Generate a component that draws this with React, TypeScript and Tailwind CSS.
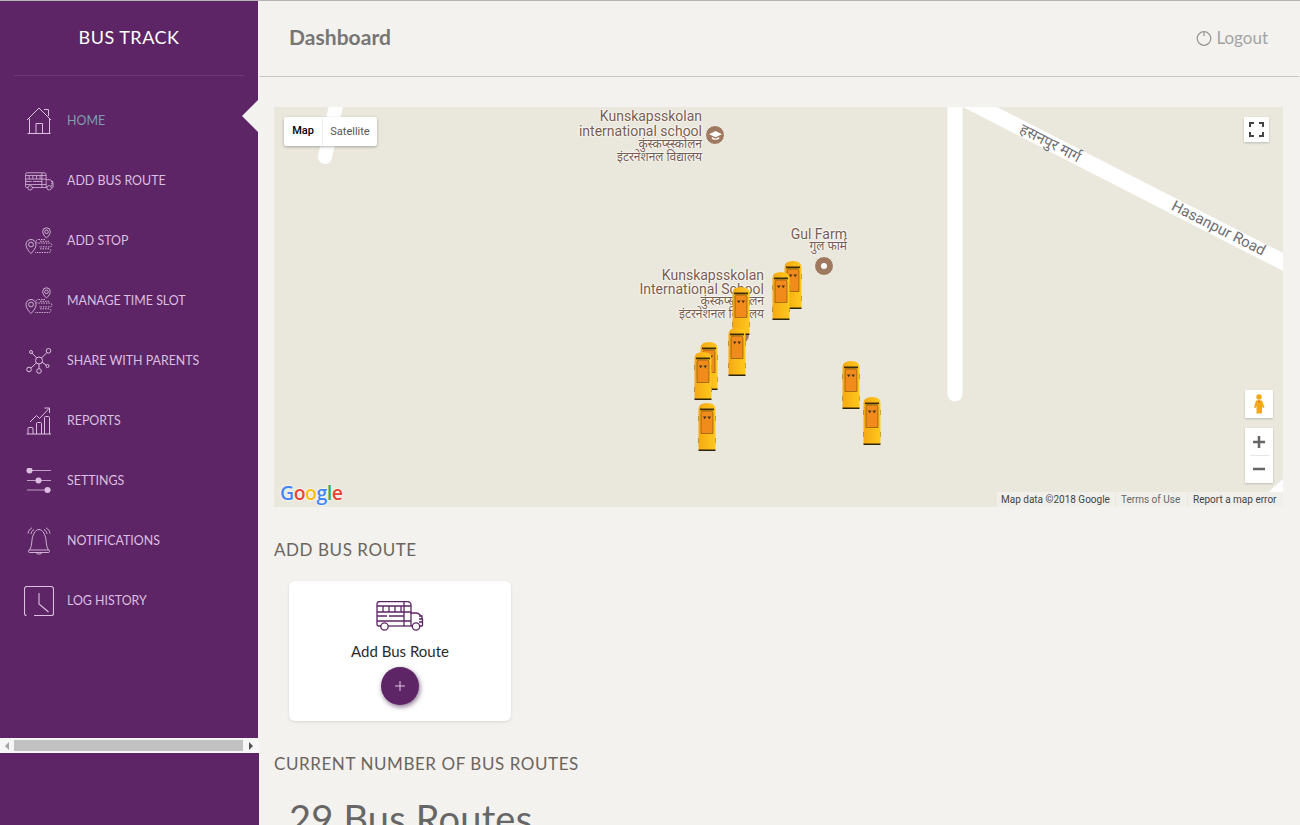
import { ReactNode } from "react";

const FONT = "font-['Lato','Open_Sans',sans-serif]";

const IconBus = ({ className }: { className?: string }) => (
  <svg viewBox="0 0 48 30" fill="none" stroke="currentColor" strokeWidth="1.3" className={className}>
    <path d="M5 25H2.500A1.500 1.500 0 0 1 1 23.500V3a2.500 2.500 0 0 1 2.500-2.500h28A3.500 3.500 0 0 1 35 4v8h5c3 0 6 3 6.500 6v6.500a1 1 0 0 1-1 .5H44" />
    <path d="M12 25h24" />
    <path d="M1 5h34M1 11h34M1 15h10M13 15h15M1 20h34" />
    <path d="M7 5v6M13 5v6M19 5v6M25 5v6M28 1v24M35 12v13" />
    <path d="M43 15h3.500M43 18h3.500M43 21h3.500" />
    <circle cx="8.500" cy="25.500" r="3.700" />
    <circle cx="40" cy="25.500" r="3.700" />
  </svg>
);

const IconHome = () => (
  <svg viewBox="0 0 26 28" fill="none" stroke="currentColor" strokeWidth="1" className="w-[26px] h-[28px]">
    <path d="M1 13 13 1l12 12" />
    <path d="M3.500 11.500V26.500h20V11.500" />
    <path d="M18 2.500h4.500v6.500" />
    <path d="M10 26.500V16.500h6.500v10" />
    <path d="M1.500 26.500h23" />
  </svg>
);

const IconPins = () => (
  <svg viewBox="0 0 28 28" fill="none" stroke="currentColor" strokeWidth="0.9" className="w-[28px] h-[28px]">
    <path d="M21.500 11s-3.800-3.300-3.800-6.400a3.800 3.800 0 0 1 7.600 0C25.300 7.700 21.500 11 21.500 11z" />
    <circle cx="21.500" cy="4.800" r="1.800" />
    <path d="M6 26.500S1 21.800 1 17.500a5 5 0 0 1 10 0c0 4.300-5 9-5 9z" />
    <circle cx="6" cy="17.500" r="2.400" />
    <g strokeDasharray="1.500 1">
      <path d="M20 12.500h-7a1.800 1.800 0 0 0 0 3.600h12a1.800 1.800 0 0 1 0 3.800H14" />
      <path d="M15 14.300h10M15 21.800h9a1.700 1.700 0 0 1 0 3.700H10" />
    </g>
  </svg>
);

const IconShare = () => (
  <svg viewBox="0 0 26 26" fill="none" stroke="currentColor" strokeWidth="1" className="w-[26px] h-[26px]">
    <circle cx="13" cy="12.500" r="3.500" />
    <circle cx="22.500" cy="2.800" r="2.300" />
    <circle cx="5" cy="4" r="1.500" />
    <circle cx="3" cy="21.500" r="2.300" />
    <circle cx="13" cy="23" r="2.300" />
    <circle cx="21.500" cy="18" r="1.500" />
    <path d="M15.500 10 21 4.500M10.800 9.800 6 5.200M10.300 15 5 20M13 16v4.700M16 14.200l4.200 2.900" />
  </svg>
);

const IconReports = () => (
  <svg viewBox="0 0 26 28" fill="none" stroke="currentColor" strokeWidth="1" className="w-[26px] h-[28px]">
    <path d="M.5 27h24.500" />
    <path d="M2 27v-5.500a1 1 0 0 1 1-1h3a1 1 0 0 1 1 1V27M10.500 27V16.500a1 1 0 0 1 1-1h3a1 1 0 0 1 1 1V27M18.500 27V10.500a1 1 0 0 1 1-1h3a1 1 0 0 1 1 1V27" />
    <path d="M4 15l6.500-6.500 3 3L23 1.500M18.500 1H23.500V6" />
  </svg>
);

const IconSliders = () => (
  <svg viewBox="0 0 26 26" stroke="currentColor" strokeWidth="0.8" className="w-[26px] h-[26px]" fill="currentColor">
    <path d="M1 2.500h24M1 12.500h24M1 22h24" />
    <circle cx="3.500" cy="2.500" r="3" stroke="none" />
    <circle cx="12.500" cy="12.500" r="3" stroke="none" />
    <circle cx="21.500" cy="22" r="3" stroke="none" />
  </svg>
);

const IconBell = () => (
  <svg viewBox="0 0 28 28" fill="none" stroke="currentColor" strokeWidth="0.9" className="w-[28px] h-[28px]">
    <path d="M4.500 23c2-3 2-6 2.500-10C7.500 8.500 10 2.500 14 2.500S20.500 8.500 21 13c.5 4 .5 7 2.500 10" />
    <rect x="3.500" y="23" width="21" height="2.500" rx="1" />
    <path d="M11 25.500c.5 2 5.500 2 6 0" />
    <path d="M6 7c.3-2 1.300-3.500 3-4.500M3 6.500C3.300 3.800 4.800 2 7 .8M22 7c-.3-2-1.300-3.500-3-4.500M25 6.500C24.700 3.800 23.200 2 21 .8" />
  </svg>
);

const IconLog = () => (
  <svg viewBox="0 0 30 30" fill="none" stroke="currentColor" strokeWidth="1.100" className="w-[30px] h-[30px]">
    <path d="M2.500 29.500a2 2 0 0 1-2-2V3A2.500 2.500 0 0 1 3 .5h24A2.500 2.500 0 0 1 29.500 3v24.500a2 2 0 0 1-2 2H10" />
    <path d="M15 7v11l9.500 8" />
  </svg>
);

const NAV: { label: string; icon: ReactNode; active?: boolean }[] = [
  { label: "Home", icon: <IconHome />, active: true },
  { label: "Add Bus Route", icon: <IconBus className="w-[29px] h-[19px]" /> },
  { label: "Add Stop", icon: <IconPins /> },
  { label: "Manage Time Slot", icon: <IconPins /> },
  { label: "Share with Parents", icon: <IconShare /> },
  { label: "Reports", icon: <IconReports /> },
  { label: "Settings", icon: <IconSliders /> },
  { label: "Notifications", icon: <IconBell /> },
  { label: "Log History", icon: <IconLog /> },
];

const Sidebar = () => (
  <aside className="w-[259px] shrink-0 flex flex-col h-[824px]">
    <div className="w-[258px] h-[737px] bg-[#5d2565] flex flex-col">
      <div className="mx-[14px] h-[75px] border-b border-[#6d3a76] flex items-center justify-center text-[18px] tracking-[0.5px] text-white pb-[1px]">
        BUS TRACK
      </div>
      <div className="relative pt-[15px]">
        {/* notch pointing at the active item */}
        <div className="absolute right-0 top-[24px] w-0 h-0 border-y-[16.500px] border-y-transparent border-r-[16px] border-r-[#f3f2ef]" />
        {NAV.map((item) => (
          <div key={item.label} className="h-[60px] flex items-center pl-[24px]">
            <span className="w-[30px] flex justify-center text-[#dcbfe0]">{item.icon}</span>
            <span
              className={`ml-[13px] pt-[1px] text-[12.400px] uppercase ${
                item.active ? "text-[#7f9db2]" : "text-[#dcbfe0]"
              }`}
            >
              {item.label}
            </span>
          </div>
        ))}
      </div>
    </div>
    <div className="h-[15px] bg-[#f6f6f6] flex items-center">
      <div className="w-[14px] flex justify-center">
        <div className="w-0 h-0 border-y-[4px] border-y-transparent border-r-[4px] border-r-[#a3a3a3]" />
      </div>
      <div className="w-[229px] h-[11px] bg-[#c1c1c1]" />
      <div className="flex-1 flex justify-center">
        <div className="w-0 h-0 border-y-[4px] border-y-transparent border-l-[4px] border-l-[#505050]" />
      </div>
    </div>
    <div className="flex-1 bg-[#5d2565]" />
  </aside>
);

const BUSES = [
  [510, 154],
  [498, 165],
  [458, 180],
  [454, 221],
  [426, 235],
  [420, 245],
  [424, 296],
  [568, 254],
  [589, 290],
];

const BusPin = ({ left, top }: { left: number; top: number }) => (
  <svg
    viewBox="0 0 18 48"
    className="absolute w-[18px] h-[48px]"
    style={{ left, top }}
  >
    <defs>
      <linearGradient id="busBody" x1="0" x2="1" y1="0" y2="0">
        <stop offset="0" stopColor="#f5a913" />
        <stop offset="1" stopColor="#ffc81c" />
      </linearGradient>
    </defs>
    <rect x="0" y="13" width="1" height="5" fill="#8a7a50" />
    <rect x="17" y="13" width="1" height="5" fill="#8a7a50" />
    <rect x="0" y="35" width="1" height="5" fill="#8a7a50" />
    <rect x="17" y="35" width="1" height="5" fill="#8a7a50" />
    <path d="M.5 6Q.5 0 9 0t8.500 6v41H.5z" fill="url(#busBody)" />
    <rect x=".5" y="46.500" width="17" height="1.500" fill="#2d2410" />
    <rect x="2" y="5.500" width="14" height="1.800" fill="#3c2c10" />
    <path d="M3 10q0-2 2-2h8q2 0 2 2v20.500H3z" fill="#f08b1c" stroke="#5e3a0c" strokeWidth="0.500" />
    <path d="M5 13.500h3.500L6.700 16.300zM9.500 13.500H13l-1.800 2.800z" fill="#40341c" />
  </svg>
);

const MapLabel = ({ className, children }: { className: string; children: ReactNode }) => (
  <div
    className={`absolute font-['Roboto','Noto_Sans',sans-serif] text-[#7a5c4e] text-right whitespace-nowrap [text-shadow:0_0_2px_#fff,0_0_2px_#fff,0_0_2px_#fff] ${className}`}
  >
    {children}
  </div>
);

const PoiDot = ({ className, children }: { className: string; children?: ReactNode }) => (
  <div className={`absolute w-[20px] h-[20px] rounded-full bg-[#a07a60] border border-[#f5f3ec] flex items-center justify-center ${className}`}>
    {children}
  </div>
);

const MapPanel = () => (
  <div className="relative h-[400px] bg-[#eae8dd] overflow-hidden font-['Roboto','Noto_Sans',sans-serif]">
    <svg viewBox="0 0 1009 400" className="absolute inset-0 w-full h-full">
      <path d="M66-20 51 50" stroke="#fff" strokeWidth="14" strokeLinecap="round" fill="none" />
      <path d="M681-10V287" stroke="#fff" strokeWidth="15" strokeLinecap="round" fill="none" />
      <path d="M689 0h34l286 146v18z" fill="#fff" />
      <path d="M1009 372 978 400h20l11-11z" fill="#fff" />
    </svg>

    <MapLabel className="right-[581px] top-[2px] text-[14px] leading-[15px]">
      Kunskapsskolan
      <br />
      international school
    </MapLabel>
    <MapLabel className="right-[581px] top-[31px] text-[12px] leading-[12.500px]">
      कुंस्कप्स्स्कोलन
      <br />
      इंटरनेशनल विद्यालय
    </MapLabel>
    <PoiDot className="left-[431px] top-[18px]">
      <svg viewBox="0 0 14 12" className="w-[13px] h-[11px]">
        <path d="M7 1 0 4.500 7 8l7-3.500zM3 7.500v2c2 1.500 6 1.500 8 0v-2L7 9.500z" fill="#fff" />
      </svg>
    </PoiDot>

    <MapLabel className="right-[436px] top-[120px] text-[14px] leading-[15px]">Gul Farm</MapLabel>
    <MapLabel className="right-[436px] top-[133px] text-[12px] leading-[12px]">गुल फार्म</MapLabel>
    <PoiDot className="left-[540px] top-[149px]">
      <div className="w-[6px] h-[6px] rounded-full bg-white" />
    </PoiDot>

    <MapLabel className="right-[519px] top-[161px] text-[14px] leading-[14px]">
      Kunskapsskolan
      <br />
      International School
    </MapLabel>
    <MapLabel className="right-[519px] top-[188px] text-[12px] leading-[13px]">
      कुंस्कप्स्स्कोलन
      <br />
      इंटरनेशनल विद्यालय
    </MapLabel>
    <PoiDot className="left-[456px] top-[218px]" />

    <div className="absolute left-[743px] top-[28px] rotate-[27deg] text-[15px] leading-[17px] text-[#6d6d72] whitespace-nowrap">
      हसनपुर मार्ग
    </div>
    <div className="absolute left-[893px] top-[113px] rotate-[27deg] text-[15px] leading-[17px] text-[#6d6d72] whitespace-nowrap">
      Hasanpur Road
    </div>

    {BUSES.map(([left, top]) => (
      <BusPin key={`${left}-${top}`} left={left} top={top} />
    ))}

    <div className="absolute left-[10px] top-[10px] h-[29px] w-[93px] bg-white rounded-[2px] shadow-[0_1px_3px_rgba(0,0,0,0.3)] flex items-center text-[11px]">
      <span className="w-[38px] text-center font-medium text-black">Map</span>
      <span className="flex-1 text-center text-[#565656] border-l border-[#eee] leading-[29px]">Satellite</span>
    </div>

    <div className="absolute left-[970px] top-[10px] w-[25px] h-[25px] bg-white shadow-[0_1px_2px_rgba(0,0,0,0.2)] flex items-center justify-center">
      <svg viewBox="0 0 15 15" className="w-[15px] h-[15px]" fill="none" stroke="#444" strokeWidth="2">
        <path d="M1 5V1h4M10 1h4v4M14 10v4h-4M5 14H1v-4" />
      </svg>
    </div>

    <div className="absolute left-[971px] top-[283px] w-[28px] h-[28px] bg-white shadow-[0_1px_2px_rgba(0,0,0,0.2)] flex items-center justify-center">
      <svg viewBox="0 0 12 20" className="w-[12px] h-[20px]">
        <circle cx="6" cy="3" r="2.700" fill="#f2a917" />
        <path d="M3 6.500h6l2.500 7-1.500.5-1-2v7.500H3.500V12l-1 2-1.500-.5z" fill="#f2a917" />
        <path d="M5 6.500h2l-1 2.500z" fill="#d9551f" />
      </svg>
    </div>

    <div className="absolute left-[971px] top-[321px] w-[28px] h-[55px] bg-white shadow-[0_1px_2px_rgba(0,0,0,0.2)] flex flex-col items-center">
      <svg viewBox="0 0 12 12" className="w-[12px] h-[12px] mt-[8px]" stroke="#666" strokeWidth="2.500">
        <path d="M6 0v12M0 6h12" />
      </svg>
      <div className="w-[19px] h-px bg-[#e6e6e6] mt-[7px]" />
      <svg viewBox="0 0 12 12" className="w-[12px] h-[12px] mt-[7px]" stroke="#666" strokeWidth="2.500">
        <path d="M0 6h12" />
      </svg>
    </div>

    <div className="absolute left-[6px] top-[374px] text-[19.500px] leading-[24px] font-['Open_Sans',sans-serif] font-semibold tracking-[-0.5px] [text-shadow:0_0_2px_#fff,0_0_2px_#fff]">
      <span className="text-[#4285f4]">G</span>
      <span className="text-[#ea4335]">o</span>
      <span className="text-[#fbbc05]">o</span>
      <span className="text-[#4285f4]">g</span>
      <span className="text-[#34a853]">l</span>
      <span className="text-[#ea4335]">e</span>
    </div>

    <div className="absolute right-0 bottom-0 h-[15px] flex items-center text-[10px] text-[#444]">
      <span className="bg-[#f0efe9] h-full pl-[4px] pr-[4px] leading-[15px] w-[118px] whitespace-nowrap">Map data ©2018 Google</span>
      <span className="bg-[#f0efe9] h-full ml-px pl-[5px] text-[#666] leading-[15px] w-[71px] whitespace-nowrap">Terms of Use</span>
      <span className="bg-[#f0efe9] h-full ml-px pl-[5px] leading-[15px] w-[95px] whitespace-nowrap">Report a map error</span>
    </div>
  </div>
);

const App = () => (
  <div className={`${FONT} h-[825px] overflow-hidden bg-[#f3f2ef] border-t border-[#b4b4b4] flex`}>
    <Sidebar />
    <main className="flex-1 min-w-0">
      <header className="h-[76px] mr-[1px] border-b border-[#cbc9c6] flex items-center justify-between pl-[30px] pr-[31px]">
        <h1 className="text-[21px] leading-[26px] -mt-[3px] font-bold text-[#767676] tracking-[0.05px]">Dashboard</h1>
        <div className="flex items-center gap-[4px] text-[17px] text-[#a3a3a3] -mt-[1px]">
          <svg viewBox="0 0 16 16" className="w-[16px] h-[16px] ml-[1px]" fill="none" stroke="#9a9a9a" strokeWidth="1.300">
            <circle cx="8" cy="8.500" r="6.800" />
            <path d="M8 1v5" />
          </svg>
          Logout
        </div>
      </header>
      <div className="pt-[30px] pl-[15px] pr-[17px]">
        <MapPanel />
        <h2 className="mt-[32px] text-[17px] leading-[22px] tracking-[0.57px] text-[#6b655e] uppercase">Add Bus Route</h2>
        <div className="mt-[20px] ml-[15px] w-[222px] h-[140px] bg-white rounded-[6px] shadow-[0_1px_3px_rgba(0,0,0,0.12)] flex flex-col items-center pt-[20px]">
          <IconBus className="w-[48px] h-[30px] text-[#5d2565]" />
          <div className="mt-[11px] text-[15px] leading-[18px] text-[#2b2b2b]">Add Bus Route</div>
          <div className="mt-[7px] w-[38px] h-[38px] rounded-full bg-[#5d2565] text-[#e3c9e6] shadow-[1px_2px_5px_rgba(60,20,70,0.6)] flex items-center justify-center">
            <svg viewBox="0 0 10 10" className="w-[10px] h-[10px]" stroke="currentColor" strokeWidth="1">
              <path d="M5 0v10M0 5h10" />
            </svg>
          </div>
        </div>
        <h2 className="mt-[32px] text-[17px] leading-[22px] tracking-[0.57px] text-[#6b655e] uppercase">Current Number of Bus Routes</h2>
        <div className="mt-[21px] ml-[15px] text-[38px] leading-[44px] text-[#666] tracking-[0.2px] whitespace-nowrap">29 Bus Routes</div>
      </div>
    </main>
  </div>
);

export default App;
